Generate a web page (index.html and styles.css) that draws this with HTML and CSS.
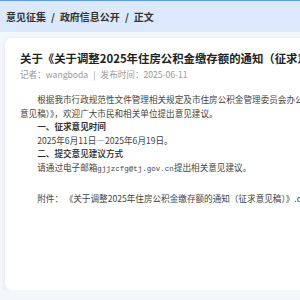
FILE: index.html
```html
<!DOCTYPE html>
<html lang="zh-CN">
<head>
<meta charset="utf-8">
<title>正文</title>
<link rel="stylesheet" href="styles.css">
</head>
<body>
<header class="crumbs">
  <span class="crumb">意见征集</span><span class="sep">/</span><span class="crumb">政府信息公开</span><span class="sep">/</span><span class="crumb">正文</span>
</header>
<main class="page">
  <article class="card">
    <h1 class="title">关于《关于调整2025年住房公积金缴存额的通知（征求意见稿）》公开征求意见的公告</h1>
    <div class="meta">记者：wangboda<span class="bar">|</span>发布时间：2025-06-11</div>
    <div class="content">
      <p class="para">根据我市行政规范性文件管理相关规定及市住房公积金管理委员会办公室有关要求，现公开征求《关于调整2025年住房公积金缴存额的通知（征求<br>意见稿）》，欢迎广大市民和相关单位提出意见建议。</p>
      <p class="para strong">一、征求意见时间</p>
      <p class="para">2025年6月11日—2025年6月19日。</p>
      <p class="para medium">二、提交意见建议方式</p>
      <p class="para">请通过电子邮箱<span class="mail">gjjzcfg@tj.gov.cn</span>提出相关意见建议。</p>
      <p class="para attach">附件：<span class="file">《关于调整2025年住房公积金缴存额的通知（征求意见稿）》.docx</span></p>
    </div>
  </article>
</main>
</body>
</html>
```
FILE: styles.css
```css
html, body {
  margin: 0;
  padding: 0;
  overflow: hidden;
  background: #f3f6fb;
  font-family: "Noto Sans CJK SC", "Noto Sans", sans-serif;
}
.crumbs {
  height: 31px;
  border-top: 1px solid #5a9ae6;
  background: #dce9fc;
  display: flex;
  align-items: center;
  padding-left: 6px;
  font-size: 10px;
  font-weight: 700;
  color: #333;
  white-space: nowrap;
}
.sep {
  padding: 0 5px;
}
.page {
  padding: 6px 0 0 5px;
  width: 620px;
}
.card {
  background: #fff;
  border-radius: 6px;
  box-shadow: 0 1px 4px rgba(120, 140, 170, 0.18);
  height: 252px;
  padding: 11px 15px 0;
  box-sizing: border-box;
}
.title {
  margin: 0;
  font-size: 11.4px;
  line-height: 18px;
  font-weight: 700;
  color: #222;
  white-space: nowrap;
}
.meta {
  margin-top: 1px;
  font-size: 8.6px;
  line-height: 12px;
  color: #9a9a9a;
  white-space: nowrap;
}
.bar {
  padding: 0 5px;
}
.content {
  margin-top: 13px;
  font-size: 8.6px;
  line-height: 13.5px;
  color: #444;
}
.para {
  margin: 0;
  text-indent: 2em;
  white-space: nowrap;
}
.strong {
  font-weight: 700;
  color: #333;
}
.medium {
  font-weight: 500;
  color: #222;
}
.mail {
  font-family: "Liberation Mono", monospace;
  font-size: 7.5px;
}
.attach {
  margin-top: 16px;
}
.file {
  padding-left: 6px;
}
```
